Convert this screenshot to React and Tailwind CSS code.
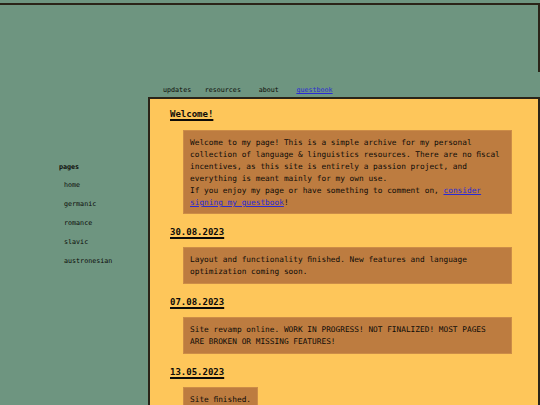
import React from 'react'

const navItems = [
  { label: 'updates', w: 'w-[41.7px]' },
  { label: 'resources', w: 'w-[54px]' },
  { label: 'about', w: 'w-[37.7px]' },
]

const pages = ['home', 'germanic', 'romance', 'slavic', 'austronesian']

function Heading({ children, first }) {
  return (
    <h2
      className={`h-[12px] text-[9px] font-bold leading-[12px] underline decoration-[1.5px] underline-offset-[1.5px] ${
        first ? '' : 'mt-[12px]'
      }`}
    >
      {children}
    </h2>
  )
}

function Note({ children, fit, first }) {
  return (
    <div
      className={`ml-[13px] border border-[#cc8c47] bg-[#bd7c40] px-[6px] pt-[6px] text-[7.8px] leading-[12px] ${
        first ? 'mt-[10px] pb-[4px]' : 'mt-[9px] pb-[5px]'
      } ${fit ? 'w-fit' : 'w-[329px]'}`}
    >
      {children}
    </div>
  )
}

export default function App() {
  return (
    <div className="h-[405px] overflow-hidden bg-[#6e9580] pt-[3px] font-['DejaVu_Sans_Mono','Liberation_Mono',monospace] text-[#0d0b08]">
      {/* header banner */}
      <div className="h-[69px] border-t-2 border-r-2 border-[#2a2418]" />

      {/* top nav */}
      <nav className="mt-[13px] mb-[2px] flex h-[10px] pl-[163px] text-[6.7px] leading-[10px]">
        {navItems.map((item) => (
          <span key={item.label} className={item.w}>
            {item.label}
          </span>
        ))}
        <a href="#" className="text-[#2b2bd4] underline">
          guestbook
        </a>
      </nav>

      <div className="flex">
        {/* sidebar */}
        <aside className="w-[148px] shrink-0 pt-[60.3px] text-[6.7px]">
          <div className="flex h-[18.8px] items-center pl-[59px] font-bold">pages</div>
          {pages.map((p) => (
            <div key={p} className="flex h-[18.8px] items-center pl-[64px]">
              {p}
            </div>
          ))}
        </aside>

        {/* main panel */}
        <main className="min-h-[400px] flex-1 border-2 border-b-0 border-[#2a2418] bg-[#fec65a] pt-[9px] pl-[20px] pb-10">
          <Heading first>Welcome!</Heading>
          <Note first>
            Welcome to my page! This is a simple archive for my personal collection of language &amp; linguistics
            resources. There are no ﬁscal incentives, as this site is entirely a passion project, and everything is
            meant mainly for my own use.
            <br />
            If you enjoy my page or have something to comment on,{' '}
            <a href="#" className="text-[#2b2bd4] underline">
              consider signing my guestbook
            </a>
            !
          </Note>

          <Heading>30.08.2023</Heading>
          <Note>Layout and functionality ﬁnished. New features and language optimization coming soon.</Note>

          <Heading>07.08.2023</Heading>
          <Note>
            Site revamp online. WORK IN PROGRESS! NOT FINALIZED! MOST PAGES
            <br />
            ARE BROKEN OR MISSING FEATURES!
          </Note>

          <Heading>13.05.2023</Heading>
          <Note fit>Site ﬁnished.</Note>
        </main>
      </div>
    </div>
  )
}
